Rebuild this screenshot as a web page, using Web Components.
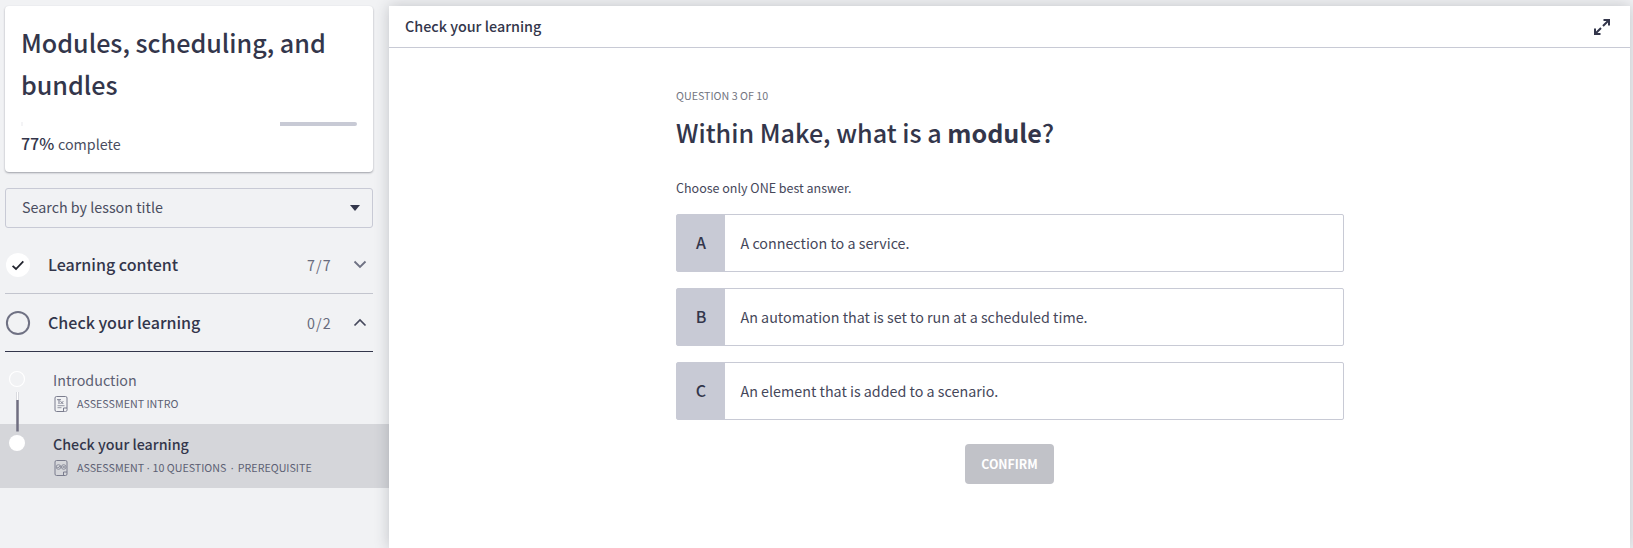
<!DOCTYPE html>
<html lang="en">
<head>
<meta charset="utf-8">
<title>Modules, scheduling, and bundles</title>
<style>
html,body{margin:0;height:100%;overflow:hidden;background:#f1f2f4}
body{font-family:"Noto Sans CJK SC","Noto Sans",sans-serif;color:#33364b;font-size:14.3px;line-height:24px}
</style>
</head>
<body>
<course-app></course-app>
<script>
const define = (name, html) => customElements.define(name, class extends HTMLElement {
  constructor() {
    super();
    const t = document.createElement('template');
    t.innerHTML = html;
    this.attachShadow({mode: 'open'}).append(t.content.cloneNode(true));
  }
});

define('progress-card', `
<style>
:host{display:block;box-sizing:border-box;height:166px;margin:0 16px 0 5px;padding:15px 16px 0;background:#fff;border-radius:4px;box-shadow:0 1px 2px rgba(40,44,60,.42)}
h1{margin:0;font-size:25.12px;line-height:42px;font-weight:500}
.bar{height:4px;margin-top:17px;display:flex;justify-content:space-between}
.bar::before{content:"";width:2px;background:#f4f4f6}
.bar i{width:77px;background:#c8cad5;border-radius:0 2px 2px 0}
p{margin:5px 0 0;line-height:24px;color:#4a4d5f}
b{font-size:16px;font-weight:500;color:#33364b;margin-right:.5px}
</style>
<h1><slot></slot></h1>
<div class="bar"><i></i></div>
<p><b>77%</b> complete</p>`);

define('lesson-search', `
<style>
:host{display:flex;align-items:center;box-sizing:border-box;height:40px;margin:16px 16px 0 5px;padding:0 12px 0 16px;border:1px solid #c8cad5;border-radius:3px;color:#4a4d5f}
span{flex:1;line-height:36px;padding-bottom:2px}
</style>
<span><slot></slot></span>
<svg width="10" height="6" viewBox="0 0 10 6"><path d="M0 0h10L5 6z" fill="#33364b"/></svg>`);

define('section-row', `
<style>
:host{display:flex;align-items:center;box-sizing:border-box;height:58px;margin:0 16px 0 5px;border-bottom:1px solid var(--line,#c3c5ce)}
.mark{width:26px;height:26px;margin-right:17px;display:flex}
.name{flex:1;font-size:16.05px;font-weight:500;line-height:26px;padding-bottom:2px}
.count{letter-spacing:1.2px;color:#686b7d;margin-right:22px}
.arrow{display:flex;margin-right:7px}
</style>
<span class="mark"><slot name="mark"></slot></span>
<span class="name"><slot></slot></span>
<span class="count"><slot name="count"></slot></span>
<span class="arrow"><slot name="arrow"></slot></span>`);

define('lesson-row', `
<style>
:host{display:flex;box-sizing:border-box;height:64px;background:var(--row,transparent)}
.rail{width:53px;box-sizing:border-box;padding-left:8px}
.name{line-height:26px;margin-top:7px;font-weight:var(--weight,400);color:var(--name,#5c5f73)}
.meta{display:flex;align-items:center;margin-top:1px;height:20px;font-size:10.7px;line-height:20px;color:#5c5f73;white-space:pre}
.icon{display:flex;width:24px;padding-left:1px;box-sizing:border-box}
</style>
<div class="rail"><slot name="rail"></slot></div>
<div><div class="name"><slot></slot></div>
<div class="meta"><span class="icon"><slot name="icon"></slot></span><slot name="meta"></slot></div></div>`);

define('course-sidebar', `
<style>
:host{display:block;width:389px;flex:none;padding-top:6px;box-sizing:border-box}
svg{display:block;overflow:visible}
.list{margin-top:8px}
.dot{font-family:"Noto Sans",sans-serif}
</style>
<progress-card>Modules, scheduling, and bundles</progress-card>
<lesson-search>Search by lesson title</lesson-search>
<section-row style="margin-top:8px">Learning content
<svg slot="mark" width="26" height="26" viewBox="0 0 26 26"><circle cx="13" cy="13" r="12" fill="#fff"/><path d="M7.600 13.800l3.400 3.200 7.300-7.600" fill="none" stroke="#22242e" stroke-width="1.800"/></svg>
<span slot="count">7/7</span>
<svg slot="arrow" width="12" height="7" viewBox="0 0 12 7"><path d="M.5.5L6 6 11.500.5" fill="none" stroke="#6e7183" stroke-width="1.800"/></svg></section-row>
<section-row style="--line:#33364b">Check your learning
<svg slot="mark" width="26" height="26" viewBox="0 0 26 26"><circle cx="13" cy="13" r="11.100" fill="none" stroke="#6f7183" stroke-width="2"/></svg>
<span slot="count">0/2</span>
<svg slot="arrow" width="12" height="7" viewBox="0 0 12 7"><path d="M.5 6.500L6 1l5.500 5.500" fill="none" stroke="#45485c" stroke-width="1.700"/></svg></section-row>
<div class="list">
<lesson-row>Introduction
<svg slot="rail" width="18" height="64"><circle cx="9" cy="19" r="7.500" fill="none" stroke="#fff" stroke-width="1.200"/><path d="M8 32h3v8H8z" fill="#d9dadf"/><path d="M9 32h1v8H9z" fill="#fff"/></svg>
<svg slot="icon" width="14" height="16" viewBox="0 0 14 16" fill="none" stroke="#7b7d8e"><rect x="1" y=".5" width="12" height="15" rx="1.500"/><path d="M9.500 15.500v-3.500H13" /><path d="M12.500 13.200l-2.200 2.200" stroke-width="1.500" stroke="#f1f2f4" opacity=".5"/><path d="M3 3.700h4M5 3.700V8M6.500 5.200l2.800 2.800M9.300 5.200L6.500 8" stroke-width="1"/><path d="M3.500 9.700h7M3.500 11.700h4" stroke-width=".8"/></svg>
<span slot="meta">ASSESSMENT INTRO</span></lesson-row>
<lesson-row style="--row:#d5d6da;--weight:500;--name:#33364b">Check your learning
<svg slot="rail" width="18" height="64"><path d="M9.500-24V7.500" stroke="#6f6e80" stroke-width="2.500"/><circle cx="9" cy="19" r="8" fill="#fff"/></svg>
<svg slot="icon" width="14" height="16" viewBox="0 0 14 16" fill="none" stroke="#7b7d8e"><rect x="1" y=".5" width="12" height="15" rx="1.500"/><path d="M9.500 15.500v-3.500H13"/><circle cx="4.500" cy="7" r="2.300" stroke-width=".8"/><circle cx="9.700" cy="7" r="2.300" stroke-width=".8"/><path d="M3.300 7l1 1 1.700-2.200M8.700 6l2 2M10.700 6l-2 2" stroke-width=".8"/></svg>
<span slot="meta">ASSESSMENT<span class="dot"> · </span>10 QUESTIONS<span class="dot" style="margin:0 1.500px"> · </span>PREREQUISITE</span></lesson-row>
</div>`);

define('answer-option', `
<style>
:host{display:flex;box-sizing:border-box;height:58px;margin-bottom:16px;border:1px solid #c8cad5;border-radius:2px;background:#fff;line-height:56px;color:#45475a}
b{width:48px;background:#c8cad5;text-align:center;font-size:16px;font-weight:500;color:#33364b;line-height:55px}
.text{padding-left:15.5px}
</style>
<b><slot name="key"></slot></b><span class="text"><slot></slot></span>`);

define('quiz-panel', `
<style>
:host{display:flex;flex-direction:column;flex:1;margin:6px 3px 0 0;background:#fff;box-shadow:0 0 14px rgba(40,44,60,.24);position:relative}
header{display:flex;align-items:center;justify-content:space-between;height:41px;border-bottom:1px solid #c8cad5;padding:0 20px 0 16px;font-weight:500;font-size:14.35px;line-height:38px}
header span{padding-bottom:2px}
main{box-sizing:border-box;width:669px;margin:0 auto;padding:36px 0 0 1px}
.step{font-size:10.7px;line-height:24px;color:#73757f}
h2{margin:3px 0 0;font-size:25.12px;line-height:42px;font-weight:500;white-space:nowrap}
h2 b{font-weight:700}
.hint{font-size:12.5px;line-height:24px;margin:23px 0 14px;color:#45475a}
.foot{display:flex;justify-content:center;padding:8px 1px 0 0}
button{width:89px;height:40px;padding:0;border:0;border-radius:4px;background:#c1c2c8;color:#fff;font:700 12.3px/40px "Noto Sans CJK SC",sans-serif}
</style>
<header><span>Check your learning</span>
<svg width="16" height="16" viewBox="0 0 16 16" fill="none" stroke="#33364b" stroke-width="2"><path d="M9.500 1H15v5.500M15 1L9 7M6.500 15H1V9.500M1 15l6-6"/></svg></header>
<main>
<div class="step">QUESTION 3 OF 10</div>
<h2>Within Make, what is a <b>module</b>?</h2>
<div class="hint">Choose only ONE best answer.</div>
<answer-option><span slot="key">A</span>A connection to a service.</answer-option>
<answer-option><span slot="key">B</span>An automation that is set to run at a scheduled time.</answer-option>
<answer-option><span slot="key">C</span>An element that is added to a scenario.</answer-option>
<div class="foot"><button>CONFIRM</button></div>
</main>`);

define('course-app', `
<style>:host{display:flex;height:100vh;overflow:hidden}</style>
<course-sidebar></course-sidebar><quiz-panel></quiz-panel>`);
</script>
</body>
</html>
